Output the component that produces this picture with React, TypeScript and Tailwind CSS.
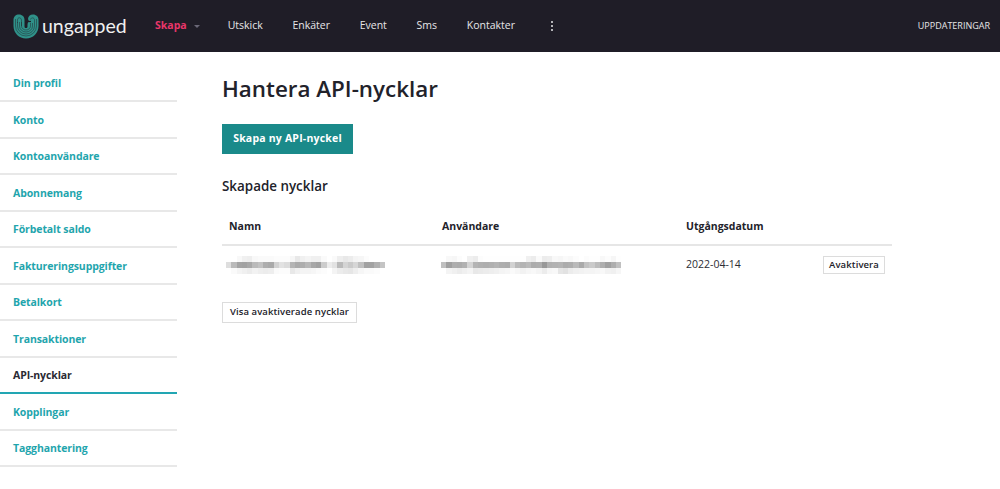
import React from "react";

const side = ["Din profil","Konto","Kontoanvändare","Abonnemang","Förbetalt saldo","Faktureringsuppgifter","Betalkort","Transaktioner","API-nycklar","Kopplingar","Tagghantering"];
const nav = ["Utskick","Enkäter","Event","Sms","Kontakter"];

const mosaicA = [
  [255,255,248,240,238,248,250,250,250,252,252,252,246,232,240,244,240,240,250,255,250,238,232,236,244,246,252,255,255,255],
  [222,186,164,162,168,186,194,174,170,210,226,220,180,170,174,184,168,162,204,236,226,186,212,202,214,192,162,162,176,196],
  [255,250,244,240,236,242,238,236,238,250,252,252,232,240,244,244,246,250,252,255,244,236,232,230,238,246,250,250,252,255],
];
const mosaicB = [
  [255,248,246,252,255,240,236,252,254,254,254,254,254,254,254,254,240,236,250,236,238,248,246,250,248,252,255,252,254,254,248,252,246,254],
  [192,160,174,172,178,212,180,176,174,176,180,174,172,210,186,180,186,172,174,152,176,178,180,172,174,186,170,194,202,188,174,160,174,192],
  [255,244,240,236,240,244,232,234,236,238,240,244,246,250,246,242,246,248,244,236,246,248,230,226,236,240,242,244,244,246,248,242,240,246],
];

function Mosaic({ rows, w }: { rows: number[][]; w: number }) {
  return (
    <div className="flex flex-col blur-[0.5px]">
      {rows.map((r, i) => (
        <div key={i} className="flex h-[5.700px]">
          {r.map((g, j) => (
            <div key={j} style={{ width: w, background: `rgb(${g},${g},${g})` }} />
          ))}
        </div>
      ))}
    </div>
  );
}

function Logo() {
  const insets = [2, 4, 6, 8];
  return (
    <svg width="26" height="25" viewBox="0 0 26 25" fill="none" className="shrink-0">
      <path d="M0.500 6C0.500 2.500 2.800 0.500 6 0.500C9.300 0.500 11.500 2.800 11.500 6V12.500C11.500 13.500 12.200 14 13 14C13.800 14 14.500 13.500 14.500 12.500V11C14.500 9 15 8 16 7.500L15 5C15 2.500 17 0.500 20 0.500C23.300 0.500 25.500 2.800 25.500 6V12C25.500 19 20 24.500 13 24.500C6 24.500 0.500 19 0.500 12Z" fill="#2f9189" />
      {insets.map((d) => (
        <path key={d} d={`M${0.5 + d} ${d < 4 ? 5 : 8}V12A${12.5 - d} ${12 - d} 0 0 0 ${25.5 - d} 12V${d < 4 ? 5 : 9}`} stroke="#1f1d27" strokeWidth="0.6" strokeOpacity="0.75" />
      ))}
      <path d="M4.500 9V6C4.500 3 8 3 8.500 6V12" stroke="#1f1d27" strokeWidth="0.6" strokeOpacity="0.75" />
      <path d="M21.500 9V6C21.500 3.500 18 3 17.500 5.500" stroke="#1f1d27" strokeWidth="0.6" strokeOpacity="0.75" />
      <path d="M15 7.500H18" stroke="#1f1d27" strokeWidth="1.200" />
    </svg>
  );
}

export default function App() {
  return (
    <div className="h-[489px] w-[1000px] overflow-hidden bg-white font-['Open_Sans',sans-serif] text-[#22222a]">
      <header className="flex h-[52px] items-center bg-[#1f1d27] pl-[13px] pr-[11px] text-[10.500px] text-[#e6e6e8]">
        <Logo />
        <span className="ml-[3px] w-[85px] font-['Lato',sans-serif] text-[19.500px] font-normal leading-none text-[#f0f0f0]">ungapped</span>
        <span className="ml-[28px] font-bold text-[#e8366a]">Skapa</span>
        <span className="ml-[7px] mt-[1px] h-0 w-0 border-x-[3px] border-t-[3px] border-x-transparent border-t-[#6b6878]" />
        <div className="ml-[28px] flex gap-[29.700px]">
          {nav.map((t) => (
            <span key={t}>{t}</span>
          ))}
        </div>
        <div className="ml-[36px] flex flex-col gap-[1.500px]">
          <span className="size-[2.500px] rounded-full bg-[#e6e6e8]" />
          <span className="size-[2.500px] rounded-full bg-[#e6e6e8]" />
          <span className="size-[2.500px] rounded-full bg-[#e6e6e8]" />
        </div>
        <span className="ml-auto mr-[-1px] text-[9px]">UPPDATERINGAR</span>
      </header>
      <div className="flex">
        <aside className="w-[177px] shrink-0 pt-[13.500px]">
          {side.map((s) => {
            const active = s === "API-nycklar";
            return (
              <div
                key={s}
                className={`flex h-[36.500px] items-center border-b-2 pl-[13px] pt-[3px] text-[10.500px] font-bold ${active ? "border-[#22a6b3] text-[#2a2a32]" : "border-[#e8e8e8] text-[#1fa5ad]"}`}
              >
                <span className="tracking-[-0.1px]">{s}</span>
              </div>
            );
          })}
        </aside>
        <main className="ml-[45px] w-[670px]">
          <h1 className="mt-[20px] h-[34px] text-[22.400px] font-semibold leading-[34px] text-[#22222a]">Hantera API-nycklar</h1>
          <button className="mt-[18px] flex h-[30px] w-[131px] items-center justify-center bg-[#1a8a8a] text-[10.500px] font-bold tracking-[0.2px] text-white">Skapa ny API-nyckel</button>
          <h2 className="mt-[23px] text-[13.400px] font-semibold leading-[19px] text-[#22222a]">Skapade nycklar</h2>
          <div className="mt-[13px] flex h-[37px] items-center border-b-2 border-[#e6e6e6] text-[10.500px] font-bold">
            <span className="ml-[7px] w-[213px]">Namn</span>
            <span className="w-[244px]">Användare</span>
            <span>Utgångsdatum</span>
          </div>
          <div className="flex h-[37px] items-center pt-[1px] text-[10.500px]">
            <div className="ml-[4px] w-[215px]"><Mosaic rows={mosaicA} w={5.3} /></div>
            <div className="w-[245px]"><Mosaic rows={mosaicB} w={5.3} /></div>
            <span className="w-[137px] text-[#2c2c34]">2022-04-14</span>
            <button className="flex h-[18px] w-[62px] items-center justify-center border border-[#dcdcdc] text-[9.500px] font-semibold tracking-[0.1px]">Avaktivera</button>
          </div>
          <button className="mt-[19px] flex h-[20.500px] w-[135px] items-center justify-center border border-[#dcdcdc] text-[9.500px] font-semibold tracking-[0.1px]">Visa avaktiverade nycklar</button>
        </main>
      </div>
    </div>
  );
}
